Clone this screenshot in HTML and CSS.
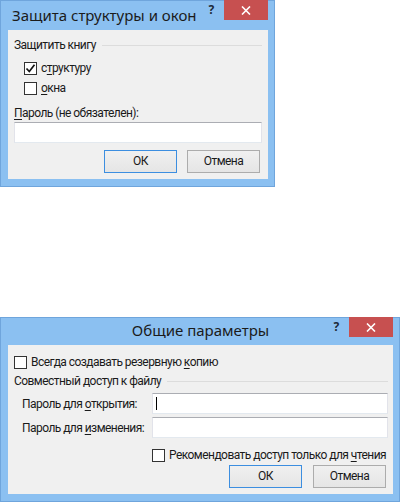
FILE: index.html
```html
<!DOCTYPE html>
<html lang="ru">
<head>
    <meta charset="UTF-8">
    <title>Диалоги</title>
    <link rel="stylesheet" href="styles.css">
</head>
<body>
    <!-- Защита структуры и окон -->
    <div class="dialog dialog-small">
        <div class="titlebar">
            <div class="title">Защита структуры и окон</div>
            <div class="help">?</div>
            <div class="close">
                <svg width="10" height="9" viewBox="0 0 10 9"><path d="M1 0.5L9 8.5M9 0.5L1 8.5" stroke="#fff" stroke-width="1.6"/></svg>
            </div>
        </div>
        <div class="client">
            <div class="group-header"><span>Защитить книгу</span><div class="line"></div></div>
            <div class="checks">
                <div class="check-row"><span class="box"><svg width="11" height="11" viewBox="0 0 11 11"><path d="M1.5 5.5L4.3 8.5L9.5 1.8" fill="none" stroke="#111" stroke-width="1.7"/></svg></span><span>с<u>т</u>руктуру</span></div>
                <div class="check-row"><span class="box"></span><span><u>о</u>кна</span></div>
            </div>
            <div class="field-label"><u>П</u>ароль (не обязателен):</div>
            <div class="textbox"></div>
            <div class="buttons">
                <div class="btn btn-default">ОК</div>
                <div class="btn">Отмена</div>
            </div>
        </div>
    </div>

    <!-- Общие параметры -->
    <div class="dialog dialog-wide">
        <div class="titlebar">
            <div class="title">Общие параметры</div>
            <div class="help">?</div>
            <div class="close">
                <svg width="10" height="9" viewBox="0 0 10 9"><path d="M1 0.5L9 8.5M9 0.5L1 8.5" stroke="#fff" stroke-width="1.6"/></svg>
            </div>
        </div>
        <div class="client">
            <div class="check-row backup"><span class="box"></span><span>Всегда создавать резервную <u>к</u>опию</span></div>
            <div class="group-header"><span>Совместный доступ к файлу</span><div class="line"></div></div>
            <div class="pass-rows">
                <div class="pass-row">
                    <div class="pass-label">Пароль для <u>о</u>ткрытия:</div>
                    <div class="textbox"><span class="caret"></span></div>
                </div>
                <div class="pass-row">
                    <div class="pass-label">Пароль для <u>и</u>зменения:</div>
                    <div class="textbox"></div>
                </div>
            </div>
            <div class="check-row readonly"><span class="box"></span><span>Рекомендовать доступ только для <u>ч</u>тения</span></div>
            <div class="buttons">
                <div class="btn btn-default">ОК</div>
                <div class="btn">Отмена</div>
            </div>
        </div>
    </div>
</body>
</html>
```

FILE: styles.css
```css
/* Reset */
* {
    margin: 0;
    padding: 0;
    box-sizing: border-box;
}
body {
    font-family: Roboto, "Noto Sans", sans-serif;
    font-size: 12px;
    letter-spacing: -0.55px;
    color: #1a1a1a;
    background-color: #fff;
    display: flex;
    flex-direction: column;
    align-items: flex-start;
    gap: 130px;
}
u {
    text-decoration: underline;
    text-underline-offset: 2px;
}
.dialog {
    background-color: #8bc0f1;
    border: 1px solid #6fa5dc;
    padding: 0 6px 7px 7px;
}
.dialog-small {
    width: 275px;
    height: 187px;
}
.dialog-wide {
    width: 400px;
    height: 185px;
}
.titlebar {
    display: flex;
    align-items: flex-start;
    height: 29px;
}
.dialog-wide .titlebar {
    height: 27px;
}
.title {
    flex: 1;
    font-family: "Noto Sans", sans-serif;
    font-size: 15px;
    letter-spacing: 0;
    line-height: 20px;
    padding-top: 4px;
    padding-left: 4px;
    color: #1b1b1b;
    white-space: nowrap;
}
.dialog-wide .title {
    text-align: center;
    padding-left: 70px;
    padding-top: 2px;
}
.help {
    width: 26px;
    text-align: center;
    font-family: "Noto Sans", sans-serif;
    font-weight: bold;
    font-size: 12px;
    line-height: 20px;
    color: #1d2a3a;
    margin-top: -1px;
}
.close {
    width: 44px;
    height: 20px;
    margin-top: -1px;
    background-color: #c75050;
    display: flex;
    align-items: center;
    justify-content: center;
}
.client {
    background-color: #f0f0f0;
    height: calc(100% - 29px);
    padding: 8px 6px 7px 6px;
}
.dialog-wide .client {
    height: calc(100% - 27px);
    padding-top: 7px;
    padding-right: 5px;
}
.group-header {
    display: flex;
    align-items: center;
    line-height: 14px;
    height: 14px;
}
.group-header .line {
    flex: 1;
    border-top: 1px solid #dcdcdc;
    margin-left: 6px;
}
.checks {
    margin-top: 6px;
    padding-left: 10px;
}
.check-row {
    display: flex;
    align-items: center;
    height: 20px;
    white-space: nowrap;
}
.box {
    flex-shrink: 0;
    width: 13px;
    height: 13px;
    border: 1px solid #333;
    background-color: #fff;
    margin-right: 4px;
    display: flex;
    align-items: center;
    justify-content: center;
}
.field-label {
    margin-top: 8px;
    line-height: 14px;
}
.textbox {
    height: 21px;
    margin-top: 2px;
    background-color: #fff;
    border: 1px solid #abadb3;
    border-left-color: #e2e3ea;
    border-right-color: #e2e3ea;
    border-bottom-color: #e3e9ef;
}
.buttons {
    display: flex;
    justify-content: flex-end;
    gap: 10px;
    margin-top: 7px;
    margin-right: 2px;
}
.btn {
    width: 73px;
    height: 23px;
    line-height: 21px;
    text-align: center;
    border: 1px solid #acacac;
    background: linear-gradient(#f0f0f0, #e5e5e5);
}
.btn-default {
    border-color: #3c8ee0;
}
.dialog-wide .group-header {
    margin-top: 2px;
}
.pass-rows {
    margin-top: 5px;
    display: flex;
    flex-direction: column;
    gap: 3px;
}
.pass-row {
    display: flex;
    align-items: center;
}
.pass-label {
    flex-shrink: 0;
    width: 138px;
    padding-left: 8px;
    white-space: nowrap;
}
.pass-row .textbox {
    flex: 1;
    margin-top: 0;
    padding: 3px;
}
.caret {
    display: block;
    width: 1px;
    height: 13px;
    background-color: #000;
}
.readonly {
    margin-top: 7px;
    padding-left: 138px;
}
.dialog-wide .buttons {
    margin-top: 0;
    gap: 11px;
}
```
